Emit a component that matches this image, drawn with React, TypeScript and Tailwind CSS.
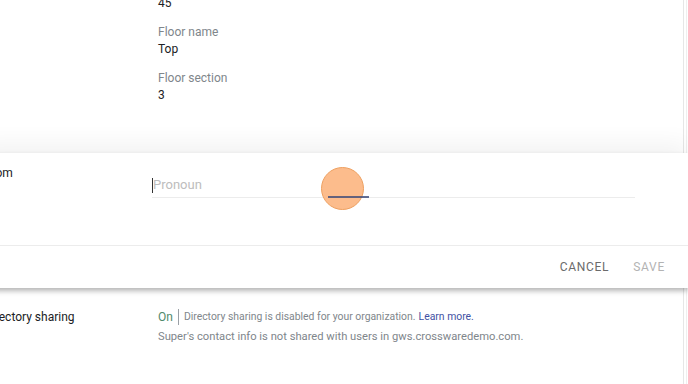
import React from "react";

export default function App() {
  return (
    <div
      className="relative w-[688px] h-[384px] overflow-hidden bg-white text-[#202124]"
      style={{ fontFamily: "Roboto, 'Noto Sans', Arial, sans-serif" }}
    >
      {/* right page border */}
      <div className="absolute top-0 bottom-0 left-[683px] w-px bg-[#e6e6e6]" />
      <div className="absolute top-0 bottom-0 left-[686px] w-px bg-[#efefef]" />

      {/* top details */}
      <div className="flex flex-col pl-[158px] -mt-[6px]">
        <div className="text-[12px] leading-[18px]">45</div>
        <div className="mt-[11px] text-[12px] leading-[18px] text-[#80868b]">Floor name</div>
        <div className="text-[12px] leading-[16px] text-[#202124]">Top</div>
        <div className="mt-[12px] text-[12px] leading-[18px] text-[#80868b]">Floor section</div>
        <div className="text-[12px] leading-[16px] text-[#202124]">3</div>
      </div>

      {/* card */}
      <div className="relative z-10 mt-[50px] -ml-[20px] w-[708px] bg-white shadow-[0_3px_5px_rgba(0,0,0,0.28),0_-10px_22px_rgba(0,0,0,0.05)]">
        <div className="relative flex h-[92px]">
          <div className="w-[172px] pt-[12px] pl-[5px] text-[12px] leading-[16px] text-[#202124]">
            From
          </div>
          <div className="relative mt-[24px] w-[483px] h-[21px] border-b border-[#ececec]">
            <div className="absolute left-0 top-[1px] h-[15px] w-px bg-[#333]" />
            <div className="pl-px text-[13px] leading-[16px] text-[#bdbdbd]">Pronoun</div>
            <div className="absolute left-[169px] top-[-10px] h-[43px] w-[43px] rounded-full border border-[#eea060] bg-[#fcbc8c]" />
            <div className="absolute left-[176px] -bottom-px h-[2px] w-[41px] bg-[#3c4a78]/80" />
          </div>
        </div>
        <div className="h-px bg-[#ececec]" />
        <div className="flex h-[42px] items-center justify-end gap-[24px] pr-[23px] text-[12px] tracking-[0.7px]">
          <span className="text-[#6b6b6b]">CANCEL</span>
          <span className="text-[#b3b3b3]">SAVE</span>
        </div>
      </div>

      {/* directory sharing */}
      <div className="flex -ml-[16px] mt-[21px]">
        <div className="w-[174px] text-[12px] leading-[16px] text-[#202124]">
          Directory sharing
        </div>
        <div className="flex flex-col">
          <div className="flex items-center text-[10.4px] leading-[16px] text-[#80868b]">
            <span className="text-[12px] text-[#4f8a6c]">On</span>
            <span className="mx-[5px] h-[16px] w-px bg-[#9aa0a6]" />
            <span>Directory sharing is disabled for your organization.</span>
            <span className="ml-[3px] text-[#3f51a3]">Learn more.</span>
          </div>
          <div className="mt-[4px] text-[11.2px] leading-[16px] text-[#80868b]">
            Super's contact info is not shared with users in gws.crosswaredemo.com.
          </div>
        </div>
      </div>
    </div>
  );
}
